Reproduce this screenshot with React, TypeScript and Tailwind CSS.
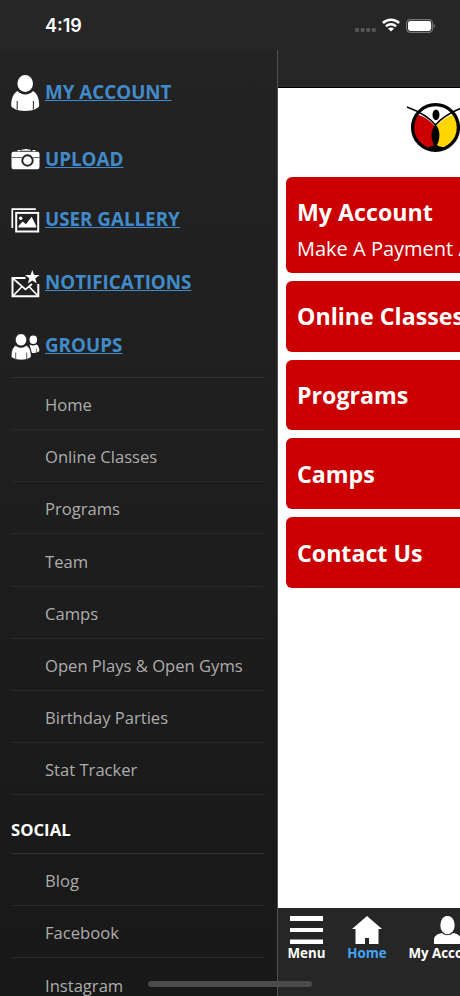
import type { ReactNode } from "react";

const groupLinks = [
  "Home",
  "Online Classes",
  "Programs",
  "Team",
  "Camps",
  "Open Plays & Open Gyms",
  "Birthday Parties",
  "Stat Tracker",
];

const socialLinks = ["Blog", "Facebook", "Instagram"];

const cards = ["Online Classes", "Programs", "Camps", "Contact Us"];

export default function App() {
  return (
    <div className="flex h-[996px] w-[460px] flex-col overflow-hidden bg-[#262626] font-['Open_Sans',sans-serif]">
      <StatusBar />
      <div className="flex min-h-0 flex-1">
        <Sidebar />
        <MainPanel />
      </div>
      <div className="absolute left-[148px] top-[981px] h-[6px] w-[164px] rounded-full bg-[#4b4b4b]" />
    </div>
  );
}

function StatusBar() {
  return (
    <header className="flex h-[50px] shrink-0 items-center justify-between pl-[45px] pr-[24px] pt-px">
      <span className="font-['Inter',sans-serif] text-[18px] font-semibold text-white">4:19</span>
      <div className="flex items-center">
        <svg width="21" height="4" viewBox="0 0 21 4" className="mr-[6px] mt-[9px]" fill="#555">
          <rect x="0" width="4" height="4" rx="1" />
          <rect x="5.6" width="4" height="4" rx="1" />
          <rect x="11.2" width="4" height="4" rx="1" />
          <rect x="16.8" width="4" height="4" rx="1" />
        </svg>
        <svg width="18" height="14" viewBox="0 0 18 14" className="mr-[6px] -mt-px">
          <g fill="none" stroke="#fff" strokeWidth="2.5">
            <path d="M.9 5C5.4 .5 12.6 .5 17.1 5" />
            <path d="M4 8.3C6.8 5.6 11.2 5.6 14 8.3" />
          </g>
          <path d="M9 13.6 6 10.6C7.6 9 10.4 9 12 10.6Z" fill="#fff" />
        </svg>
        <svg width="30" height="14" viewBox="0 0 30 14">
          <rect x=".6" y=".6" width="26" height="12.8" rx="3.8" fill="none" stroke="#777" strokeWidth="1.1" />
          <rect x="2" y="2" width="23.2" height="10" rx="2.4" fill="#fff" />
          <path d="M27.6 4.8c1.8.7 1.8 3.7 0 4.4Z" fill="#777" />
        </svg>
      </div>
    </header>
  );
}

function Sidebar() {
  return (
    <aside className="flex w-[278px] shrink-0 flex-col overflow-hidden border-r border-[#505050] bg-linear-to-b from-[#232323] to-[#181818] pl-[11px] pr-[12px] pt-[25px]">
      <nav className="flex flex-col">
        <NavLink label="MY ACCOUNT" className="h-[36px] mb-[38px] pb-[2px]" icon={<AccountIcon />} />
        <NavLink label="UPLOAD" className="h-[21px] mb-[38px] pb-px" icon={<CameraIcon />} />
        <NavLink label="USER GALLERY" className="h-[25px] mb-[37px] pb-[3px]" icon={<GalleryIcon />} />
        <NavLink label="NOTIFICATIONS" className="h-[28px] mb-[36px] pb-[4px]" icon={<MailIcon />} />
        <NavLink label="GROUPS" className="h-[26px] mb-[17px] pb-[4px]" icon={<GroupsIcon />} />
      </nav>
      <LinkList items={groupLinks} />
      <h2 className="mt-[22px] mb-[11px] h-[25px] shrink-0 text-[16.7px] font-bold leading-[25px] text-white">SOCIAL</h2>
      <LinkList items={socialLinks} />
    </aside>
  );
}

function NavLink({ label, icon, className }: { label: string; icon: ReactNode; className: string }) {
  return (
    <a className={`flex shrink-0 items-center ${className}`}>
      <span className="mr-[5px] h-full w-[29px] overflow-visible">{icon}</span>
      <span className="text-[18.8px] font-bold leading-none text-[#428bca] underline">{label}</span>
    </a>
  );
}

function LinkList({ items }: { items: string[] }) {
  return (
    <ul className="shrink-0 border-t border-[#303030]">
      {items.map((item) => (
        <li key={item} className="flex h-[52.15px] items-center border-b border-[#292929] pl-[34px] pt-[4px] text-[16.6px] text-[#adadad]">
          {item}
        </li>
      ))}
    </ul>
  );
}

function MainPanel() {
  return (
    <main className="flex w-[460px] shrink-0 flex-col bg-white">
      <div className="h-[38px] shrink-0 border-b border-black bg-[#262626]" />
      <div className="flex min-h-0 flex-1 flex-col">
        <div className="h-[88.5px] shrink-0 pl-[128px] pt-[14px]">
          <Logo />
        </div>
        <div className="flex flex-col gap-2 px-2">
          <section className="h-[96.3px] rounded-md bg-[#cb0000] px-[11px] pt-[19px] text-white">
            <h3 className="text-[23.2px] font-bold leading-[32px]">My Account</h3>
            <p className="mt-[6px] text-[20px] leading-[30px]">Make A Payment And More</p>
          </section>
          {cards.map((title) => (
            <section key={title} className="flex h-[70.8px] items-center rounded-md bg-[#cb0000] px-[11px] pt-px text-white">
              <h3 className="text-[23.2px] font-bold">{title}</h3>
            </section>
          ))}
        </div>
      </div>
      <TabBar />
    </main>
  );
}

function TabBar() {
  return (
    <footer className="flex h-[88px] shrink-0 bg-[#262626] pt-[8px] text-[13.3px] font-bold leading-[19px] text-white">
      <Tab label="Menu" className="w-[57px]">
        <path d="M0 0h33v5H0zM0 12h33v4H0zM0 23.5h33v4.5H0z" />
      </Tab>
      <Tab label="Home" className="w-[64px]">
        <path d="M16 0 31 13H27.5v15H18v-6h-4v6H4.5V13H1Z" />
      </Tab>
      <Tab label="My Account" className="w-[97px]">
        <ellipse cx="16.5" cy="9" rx="7.2" ry="9.2" />
        <path d="M3 28v-4c0-4 3-6 8-7 3 3 8 3 11 0 5 1 8 3 8 7v4Z" />
      </Tab>
    </footer>
  );
}

function Tab({ label, className, children }: { label: string; className: string; children: ReactNode }) {
  const active = label === "Home";
  return (
    <div className={`flex shrink-0 flex-col items-center ${className}`}>
      <svg width="33" height="28" viewBox="0 0 33 28" fill="#fff">
        {children}
      </svg>
      <span className={active ? "whitespace-nowrap text-[#42a5f5]" : "whitespace-nowrap"}>{label}</span>
    </div>
  );
}

function Logo() {
  return (
    <svg width="60" height="54" viewBox="0 0 60 54">
      <circle cx="29.5" cy="25.5" r="23" fill="#fff" />
      <path d="M11.5 12.5Q22 16 29 24Q25 34 29 45H17A23 23 0 0 1 11.5 12.5Z" fill="#cb0000" />
      <path d="M47.5 12.5Q37 16 30 24Q34 34 30 45H42A23 23 0 0 0 47.5 12.5Z" fill="#ffd600" />
      <circle cx="29.5" cy="25.5" r="22.9" fill="none" stroke="#000" strokeWidth="3.3" />
      <path d="M1 5Q21 12.5 29.5 23Q38 12.5 58 5" fill="none" stroke="#000" strokeWidth="1.5" />
      <ellipse cx="30" cy="12.8" rx="3.5" ry="5.4" />
      <path d="M29.5 22.5C35 28 34 38 31 43Q33 45 39 45Q30 50 20 45Q26 45 28 43C25 38 24 28 29.5 22.5Z" />
    </svg>
  );
}

function AccountIcon() {
  return (
    <svg width="29" height="36" viewBox="0 0 29 36" fill="#fff">
      <ellipse cx="14.2" cy="8.5" rx="7.8" ry="8.5" />
      <path d="M6.5 16C10 20.5 18.5 20.5 22 16C26 18 28.3 24 28.2 30.5C28 33 22 36 14.2 36S.4 33 .2 30.5C.2 24 2.5 18 6.5 16Z" />
      <path d="M6.2 26v8.5M22.4 26v8.5" stroke="#333" strokeWidth="1.1" />
    </svg>
  );
}

function CameraIcon() {
  return (
    <svg width="29" height="21" viewBox="0 0 29 21" fill="#fff">
      <path d="M10 1.8 11 .6h2.5V0h3v.6H19l1 1.2ZM3 2.2h3.5V1h3v1.2M21.5 2.2V1h3v1.2Z" />
      <path d="M2.5 2.8h24q2 0 2 2v13q0 2.5-2 2.5h-24q-2 0-2-2.5v-13q0-2 2-2Z" />
      <path d="M.5 8.5h11M22 8.5h6.5" stroke="#444" strokeWidth=".8" />
      <circle cx="16.5" cy="11.5" r="5.2" stroke="#222" strokeWidth="1.9" />
    </svg>
  );
}

function GalleryIcon() {
  return (
    <svg width="29" height="25" viewBox="0 0 29 25">
      <path d="M1.3 20V1.2h23.5" fill="none" stroke="#fff" strokeWidth="1.7" />
      <rect x="5.2" y="4.9" width="22" height="18.6" fill="none" stroke="#fff" strokeWidth="2" />
      <circle cx="9.7" cy="10.3" r="1.7" fill="#fff" />
      <path d="M7.5 19.5V18l4.2-4.5 3.2 2.8 5.8-7.5 4.5 9.2v1.5Z" fill="#fff" />
    </svg>
  );
}

function MailIcon() {
  return (
    <svg width="29" height="28" viewBox="0 0 29 28">
      <path d="M14.5 8H1.5v18.2h25.8V14" fill="none" stroke="#fff" strokeWidth="2" />
      <path d="M2 8.5 14.5 19.5 21 14M2 26l9-9.5M27 26l-9-9.5" fill="none" stroke="#fff" strokeWidth="1.7" />
      <path d="m21.3 0 1.7 5h5.5l-4.3 3.4 1.6 5.2-4.5-3-4.5 3 1.6-5.2L14.1 5h5.5Z" fill="#fff" />
    </svg>
  );
}

function GroupsIcon() {
  return (
    <svg width="29" height="26" viewBox="0 0 29 26" fill="#fff">
      <ellipse cx="22.3" cy="5.8" rx="3.8" ry="4.2" />
      <path d="M18.5 10.5q3.5 2 7.2 0 2.5 1.5 2.7 6.5c-1.5 1.5-4 2-7.5 2Z" />
      <path d="M25.6 14.5v4" stroke="#333" strokeWidth=".7" />
      <ellipse cx="10" cy="5.8" rx="5.7" ry="6.2" stroke="#202020" strokeWidth=".8" />
      <path d="M4.5 11.5q5.5 4 11 0c3.3 1.5 4.8 6.5 4.6 11.5-2 2-6 3-10 3S2.3 25 .2 23c0-5 1.3-10 4.3-11.5Z" stroke="#202020" strokeWidth=".6" />
      <path d="M4.7 18.5v6.5M15.7 18.5v6.5" stroke="#333" strokeWidth=".8" />
    </svg>
  );
}
